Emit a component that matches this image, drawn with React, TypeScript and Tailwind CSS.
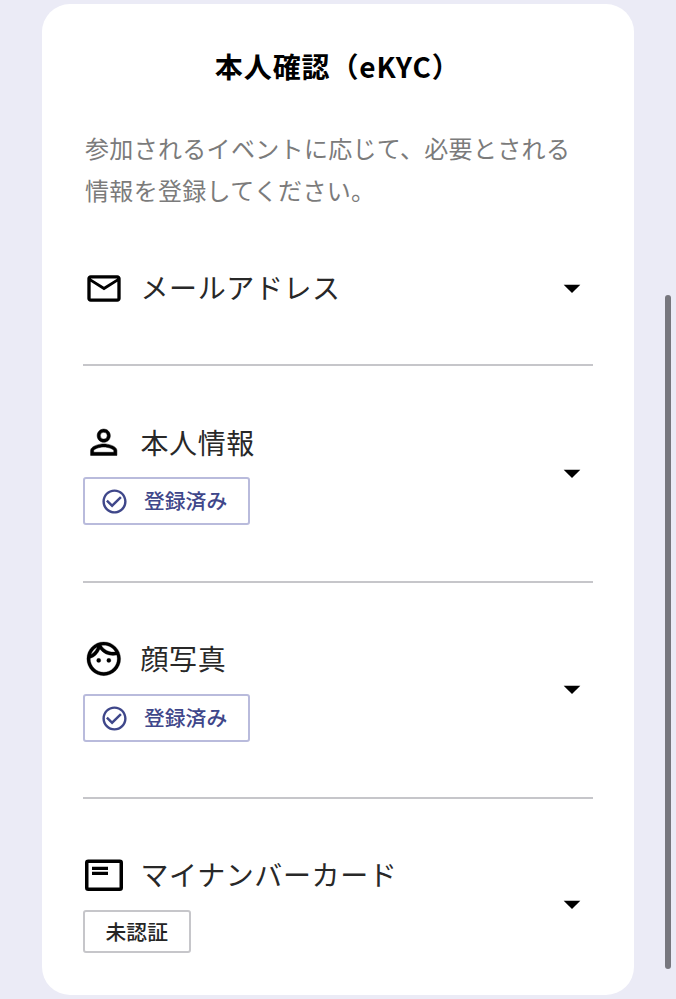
import { MdOutlineMail, MdPersonOutline, MdOutlineFace, MdCheckCircleOutline, MdArrowDropDown } from "react-icons/md";
import type { ReactNode } from "react";

function Row({ icon, title, badge, done, className, arrow, titleHeight = "h-[40px]" }: { icon: ReactNode; title: string; badge?: string; done?: boolean; className: string; arrow: string; titleHeight?: string }) {
  return (
    <section className={`flex justify-between ${className}`}>
      <div>
        <div className="flex h-[40px] items-center">
          <span className="flex w-[42px] shrink-0 justify-center">{icon}</span>
          <h2 className={`ml-[15.5px] text-[28px] leading-[40px] tracking-[0.6px] whitespace-nowrap text-[#282828] ${titleHeight}`}>{title}</h2>
        </div>
        {badge && done && (
          <div className="mt-[15px] flex h-[48px] w-[166.5px] items-center rounded-[3px] border-2 border-[#b9bbdc] pl-[15px] text-[20.8px] font-medium text-[#3f478a]">
            <MdCheckCircleOutline className="mr-[15px] size-[29px]" />
            {badge}
          </div>
        )}
        {badge && !done && (
          <div className="mt-[16px] flex h-[43px] w-[107.5px] items-center justify-center rounded-[3px] border-2 border-[#c6c6ca] text-[20.8px] font-medium text-[#252525]">{badge}</div>
        )}
      </div>
      <MdArrowDropDown className={`mr-[1px] size-[40px] shrink-0 text-black ${arrow}`} />
    </section>
  );
}

function CardIcon() {
  return (
    <svg viewBox="0 0 40 34" className="h-[34px] w-[40px] translate-y-[1.5px]" fill="none" stroke="black" strokeWidth="3.5">
      <rect x="2.75" y="2.75" width="34.5" height="28" rx="1.5" />
      <path d="M8 9.8h16M8 14.8h16" strokeWidth="3.2" />
    </svg>
  );
}

export default function App() {
  return (
    <main className="relative h-[999px] w-[676px] overflow-hidden bg-[#ebebf6] pt-1 pl-[41.5px] font-['Noto_Sans_CJK_JP',sans-serif]">
      <div className="h-[991px] w-[592.5px] rounded-[28px] bg-white px-[41.5px] pt-[42px]">
        <h1 className="h-[40px] text-center text-[28px] leading-[40px] font-bold tracking-[0.9px] text-black">本人確認（eKYC）</h1>
        <p className="mt-[41px] ml-[2px] h-[84px] text-[24px] leading-[42px] tracking-[0.32px] whitespace-nowrap text-[#7b7b7b]">参加されるイベントに応じて、必要とされる<br />情報を登録してください。</p>
        <Row className="mt-[57px] h-[98px] border-b-2 border-[#c6c6ca]" arrow="" titleHeight="h-[42px]" icon={<MdOutlineMail className="size-[40px] translate-y-[0.5px]" />} title="メールアドレス" />
        <Row className="mt-[56px] h-[161px] border-b-2 border-[#c6c6ca]" arrow="mt-[31px]" icon={<MdPersonOutline className="size-[39.5px] translate-y-[0.5px] [&>path[fill=none]]:stroke-none" stroke="currentColor" strokeWidth="0.3" strokeLinejoin="round" />} title="本人情報" badge="登録済み" done />
        <Row className="mt-[56px] h-[160px] border-b-2 border-[#c6c6ca]" arrow="mt-[30px]" titleHeight="h-[42px]" icon={<MdOutlineFace className="size-[40.5px] -translate-x-[0.5px] -translate-y-[0.5px] [&>path[fill=none]]:stroke-none" stroke="currentColor" strokeWidth="0.15" />} title="顔写真" badge="登録済み" done />
        <Row className="mt-[55px] h-[120px]" arrow="mt-[30px]" icon={<CardIcon />} title="マイナンバーカード" badge="未認証" />
      </div>
      <div className="absolute top-[295px] right-[5px] h-[674px] w-[6px] rounded-full bg-[#77777e]" />
    </main>
  );
}
